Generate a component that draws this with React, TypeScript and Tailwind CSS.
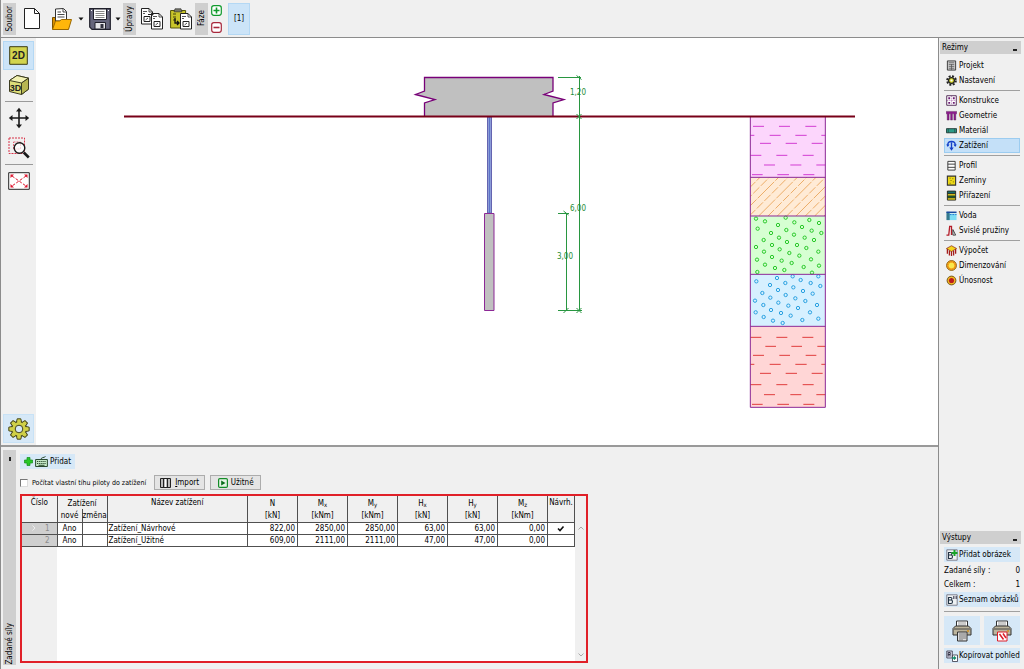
import React from "react";

type IconProps = { children: React.ReactNode; box?: string; className?: string };

function Icon({ children, box = "0 0 12 12", className = "h-3 w-3" }: IconProps) {
  return (
    <svg viewBox={box} className={`${className} shrink-0`} fill="none" aria-hidden="true">
      {children}
    </svg>
  );
}

/* ---------- top toolbar ---------- */

function StripLabel({ text }: { text: string }) {
  return (
    <div className="flex h-8 w-[13px] items-center justify-center bg-[#cfcfcf]">
      <span className="rotate-180 leading-[13px] [writing-mode:vertical-rl]">{text}</span>
    </div>
  );
}

function Caret() {
  return (
    <Icon box="0 0 6 4" className="h-1 w-1.5">
      <path d="M0.5 0.5h5L3 3.5z" fill="#111" />
    </Icon>
  );
}

function Sheet({ x, y }: { x: number; y: number }) {
  return (
    <g transform={`translate(${x} ${y})`}>
      <path d="M.5.5h7.500l3.500 3.500v12H.5z" fill="#fff" stroke="#222" />
      <path d="M8 .5v3.500h3.500" stroke="#222" strokeWidth=".8" />
      <path d="M2 3.500h4M2 5.500h2" stroke="#444" strokeWidth=".9" />
      <path d="M3 8.500h6v5H3z" stroke="#222" />
      <path d="M4.500 12l2.500-2" stroke="#222" strokeWidth=".8" />
    </g>
  );
}

function TopBar() {
  return (
    <header className="flex h-[38px] shrink-0 items-center border-b border-[#8c8c8c] pl-0.5">
      <StripLabel text="Soubor" />
      <button aria-label="Nový" className="ml-2">
        <Icon box="0 0 16 21" className="h-[21px] w-4">
          <path d="M.5.5h10l5 5v15H.5z" fill="#fff" stroke="#222" />
          <path d="M10.500.5v5h5" stroke="#222" />
        </Icon>
      </button>
      <button aria-label="Otevřít" className="ml-3 flex items-center gap-1.5">
        <Icon box="0 0 20 22" className="h-[22px] w-5">
          <path d="M.5 21V9.500h5l2 2h9V21z" fill="#d99000" stroke="#7a5200" />
          <path d="M3.500 13V1l8-.5 3 3V13z" fill="#fff" stroke="#333" />
          <path d="M11 1v3h3M5.500 4H9M5.500 6.500h7M5.500 9h7" stroke="#333" strokeWidth=".9" />
          <path d="M.5 21.500l3-8.500h4l2-1.500h10l-3 10z" fill="#ffb60a" stroke="#9a6800" />
        </Icon>
        <Caret />
      </button>
      <button aria-label="Uložit" className="ml-[5px] flex items-center gap-1">
        <Icon box="0 0 22 22" className="h-[22px] w-[22px]">
          <path d="M.7.7h20.600v20.600H3L.7 19z" fill="#65657c" stroke="#20202c" strokeWidth="1.200" />
          <path d="M4.500 1h13v10.500h-13z" fill="#fff" stroke="#20202c" />
          <path d="M6.500 3.500h9M6.500 5.500h9M6.500 7.500h9M6.500 9.500h9" stroke="#888" />
          <path d="M6 14.500h10.500V21H6z" fill="#e4e4e8" stroke="#20202c" />
          <path d="M11.500 16h3v4h-3z" fill="#30303e" />
          <path d="M2 2.500h1M19 2.500h1" stroke="#fff" />
        </Icon>
        <Caret />
      </button>
      <div className="ml-0.5">
        <StripLabel text="Úpravy" />
      </div>
      <button aria-label="Kopírovat" className="ml-[5px]">
        <Icon box="0 0 22 22" className="h-[22px] w-[22px]">
          <Sheet x={0} y={0} />
          <Sheet x={10} y={5} />
          <path d="M7 6.500h5m-1.500-1.500L12 6.500 10.500 8" stroke="#222" />
        </Icon>
      </button>
      <button aria-label="Vložit" className="ml-[7px]">
        <Icon box="0 0 22 22" className="h-[22px] w-[22px]">
          <path d="M.6 2.500h15V20H.6z" fill="#c9c52a" stroke="#55540c" />
          <path d="M5 .8h6l1 3H4z" fill="#77776a" stroke="#333" strokeWidth=".7" />
          <path d="M3 6h3M3 9h3M3 12h3" stroke="#44440c" />
          <path d="M5 10v5h4m-2-2l2 2-2 2" stroke="#111" strokeWidth="1.300" />
          <Sheet x={10} y={5} />
        </Icon>
      </button>
      <div className="ml-[3px]">
        <StripLabel text="Fáze" />
      </div>
      <div className="ml-[3px] flex flex-col gap-1.5">
        <button aria-label="Přidat fázi">
          <Icon box="0 0 11 11" className="h-[11px] w-[11px]">
            <rect x=".7" y=".7" width="9.600" height="9.600" rx="2.200" fill="#fff" stroke="#109a2c" strokeWidth="1.200" />
            <path d="M5.500 2.500v6M2.500 5.500h6" stroke="#109a2c" strokeWidth="1.600" />
          </Icon>
        </button>
        <button aria-label="Odebrat fázi">
          <Icon box="0 0 11 11" className="h-[11px] w-[11px]">
            <rect x=".7" y=".7" width="9.600" height="9.600" rx="2.200" fill="#fff" stroke="#a8283c" strokeWidth="1.200" />
            <path d="M2.500 5.500h6" stroke="#a8283c" strokeWidth="1.600" />
          </Icon>
        </button>
      </div>
      <button className="ml-1.5 h-8 w-[22px] border border-[#b4d8f4] bg-[#cce4f8]">[1]</button>
    </header>
  );
}

/* ---------- left view tools ---------- */

function ViewTools() {
  return (
    <nav aria-label="Pohled" className="flex w-[35px] shrink-0 flex-col items-start pt-[3px] pb-0.5 pl-0.5">
      <button aria-label="2D" className="flex h-[29px] w-[31px] items-center justify-center border border-[#b4d8f4] bg-[#cce4f8]">
        <Icon box="0 0 19 19" className="h-[19px] w-[19px]">
          <path d="M.7.7h17.600v17.600H.7z" fill="#d2d44e" stroke="#3c3c14" />
          <text x="9.500" y="13" textAnchor="middle" fontSize="10" fontWeight="700" fill="#222" className="font-['Liberation_Sans',sans-serif]">2D</text>
        </Icon>
      </button>
      <button aria-label="3D" className="flex h-[29px] w-[31px] items-center justify-center">
        <Icon box="0 0 22 22" className="h-[22px] w-[22px]">
          <path d="M1.500 6.500L9 1.500l11.500 2.700v11L13.500 20.500l-12-3z" fill="#dcdc78" stroke="#3c3c20" />
          <path d="M1.500 6.500l12 2.500 7-4.800L9 1.500z" fill="#f2f2b4" stroke="#3c3c20" />
          <path d="M13.500 9l7-4.800v11l-7 5.300z" fill="#b6b652" stroke="#3c3c20" />
          <text x="7.500" y="16.500" textAnchor="middle" fontSize="9" fontWeight="700" fill="#222" className="font-['Liberation_Sans',sans-serif]">3D</text>
        </Icon>
      </button>
      <div className="ml-0.5 h-[3px] w-7 border-b border-[#9a9a9a]" />
      <button aria-label="Posun" className="flex h-8 w-[31px] items-center justify-center">
        <Icon box="0 0 22 22" className="h-[22px] w-[22px]">
          <path d="M11 2v18M2 11h18" stroke="#1a1a1a" strokeWidth="1.600" />
          <path d="M8 4.500L11 .8l3 3.700zM8 17.500l3 3.700 3-3.700zM4.500 8L.8 11l3.700 3zM17.500 8l3.700 3-3.700 3z" fill="#1a1a1a" />
        </Icon>
      </button>
      <button aria-label="Zvětšit" className="flex h-7 w-[31px] items-center justify-center">
        <Icon box="0 0 22 22" className="h-[22px] w-[22px]">
          <path d="M1 1h15.500v15.500H1z" stroke="#d83248" strokeDasharray="2 1" />
          <path d="M5.500 5h7v7h-7z" stroke="#d83248" strokeWidth=".7" strokeDasharray="2 1" />
          <circle cx="11.500" cy="11" r="5.300" fill="#fff" fillOpacity=".7" stroke="#1a1a1a" strokeWidth="1.400" />
          <path d="M15.800 15.500l5 5" stroke="#1a1a1a" strokeWidth="2.600" />
        </Icon>
      </button>
      <div className="ml-0.5 h-[3px] w-7 border-b border-[#9a9a9a]" />
      <button aria-label="Zobrazit vše" className="flex h-8 w-[31px] items-center justify-center">
        <Icon box="0 0 22 18" className="h-[18px] w-[22px]">
          <path d="M.7.7h20.600v16.600H.7z" fill="#fff" stroke="#252525" />
          <path d="M4 4l14 10M18 4L4 14" stroke="#dd1830" strokeDasharray="3 1.500" />
          <path d="M2.500 6V2.500H6zM19.500 6V2.500H16zM2.500 12v3.500H6zM19.500 12v3.500H16z" fill="#dd1830" />
        </Icon>
      </button>
      <button aria-label="Nastavení zobrazení" className="mt-auto flex h-[29px] w-[31px] items-center justify-center border border-[#c8e2f6] bg-[#d6e8f7]">
        <Icon box="-11 -11 22 22" className="h-[22px] w-[22px]">
          <g fill="#d0d048" stroke="#45451c">
            {[0, 45, 90, 135, 180, 225, 270, 315].map((a) => (
              <path key={a} d="M-2.600-6.500l.8-3.700h3.600l.8 3.700z" transform={`rotate(${a})`} />
            ))}
            <circle r="7.200" />
          </g>
          {[0, 45, 90, 135, 180, 225, 270, 315].map((a) => (
            <path key={a} d="M-2-6l.6-2.500h2.800L2-6z" fill="#d0d048" transform={`rotate(${a})`} />
          ))}
          <circle r="3.800" fill="#d6e8f7" stroke="#45451c" />
        </Icon>
      </button>
    </nav>
  );
}

/* ---------- pile and soil profile drawing ---------- */

const claySegments: [number, number, number][] = [
  [64, 39, 72], [64, 117, 150], [64, 196, 229],
  [91, 31, 43], [91, 89, 122], [91, 166, 200], [91, 244, 256],
  [115, 60, 93], [115, 137, 171], [115, 215, 248],
  [151, 31, 64], [151, 109, 142], [151, 188, 221],
  [180, 72, 105], [180, 151, 184], [180, 229, 256],
  [209, 36, 68], [209, 112, 147], [209, 190, 223],
];

const rockSegments: [number, number, number][] = [
  [697, 31, 64], [697, 109, 142], [697, 187, 220],
  [724, 76, 108], [724, 154, 186], [724, 232, 256],
  [751, 39, 72], [751, 118, 150], [751, 197, 229],
  [778, 31, 43], [778, 89, 122], [778, 166, 200], [778, 244, 256],
  [805, 60, 93], [805, 137, 171], [805, 215, 248],
  [839, 31, 64], [839, 109, 142], [839, 188, 221],
  [869, 72, 105], [869, 151, 184], [869, 229, 256],
  [898, 36, 68], [898, 112, 147], [898, 190, 223],
];

const greenDots: [number, number][] = [
  [48, 341], [75, 349], [137, 338], [163, 352], [208, 345], [237, 354], [114, 360], [53, 371], [139, 375], [186, 366],
  [93, 384], [162, 389], [215, 377], [244, 384], [117, 398], [194, 398], [71, 405], [141, 411], [222, 405], [96, 420],
  [171, 420], [48, 426], [119, 433], [199, 429], [72, 440], [148, 444], [235, 440], [96, 456], [178, 452], [51, 464],
  [125, 467], [213, 463], [155, 474], [75, 479], [237, 482], [105, 489], [191, 486], [133, 495], [52, 501], [216, 503],
];

const blueDots: [number, number][] = [
  [49, 529], [111, 519], [182, 525], [235, 514], [90, 540], [136, 534], [212, 534], [160, 547], [241, 543], [114, 555],
  [67, 564], [189, 558], [137, 570], [218, 566], [91, 578], [166, 580], [45, 587], [196, 588], [115, 593], [70, 600],
  [145, 602], [231, 600], [93, 615], [174, 609], [47, 622], [123, 624], [210, 622], [152, 632], [71, 636], [235, 641],
  [187, 645], [99, 647], [128, 654], [158, 514],
];

const hatchStarts = [-84, -56, -28, 0, 28, 56, 84, 112, 140, 168, 196, 224];

function SoilColumn() {
  return (
    <g transform="translate(740 105) scale(.33333)">
      <clipPath id="hatch"><path d="M31 217h225v116H31z" /></clipPath>
      <path d="M31 36h225v181H31z" fill="#fcd6fc" />
      <path d="M31 217h225v116H31z" fill="#ffebd6" />
      <path d="M31 333h225v175H31z" fill="#d6ffd2" />
      <path d="M31 508h225v156H31z" fill="#d6f0ff" />
      <path d="M31 664h225v243H31z" fill="#ffd6d6" />
      <g stroke="#d23cd2" strokeWidth="3">
        {claySegments.map(([y, a, b]) => <path key={`${y}-${a}`} d={`M${a} ${y}H${b}`} />)}
      </g>
      <g stroke="#e8a052" strokeWidth="2.500" clipPath="url(#hatch)">
        {hatchStarts.map((x, i) => (
          <path key={x} d={`M${x + 28} 333l117-117`} strokeDasharray={i % 2 ? "26 6" : "70 5"} />
        ))}
      </g>
      <g stroke="#28c828" strokeWidth="3">
        {greenDots.map(([x, y]) => <circle key={`${x}-${y}`} cx={x} cy={y} r="5" />)}
      </g>
      <g stroke="#28a0e0" strokeWidth="3">
        {blueDots.map(([x, y]) => <circle key={`${x}-${y}`} cx={x} cy={y} r="5" />)}
      </g>
      <g stroke="#e03c3c" strokeWidth="3">
        {rockSegments.map(([y, a, b]) => <path key={`${y}-${a}`} d={`M${a} ${y}H${b}`} />)}
      </g>
      <path d="M31 36V907H256V36M31 217H256M31 333H256M31 508H256M31 664H256" stroke="#8c2896" strokeWidth="3" />
    </g>
  );
}

function Drawing() {
  return (
    <svg viewBox="36 38 902 407" className="h-full w-full" fill="none" role="img" aria-label="Schéma piloty a geologický profil">
      <SoilColumn />
      <path d="M424.500 116V103l10.500-3.500-19.500-5 9-3.500V77.500H553V91l-9 3.500 20 5-11 3.500v13z" fill="#c0c0c0" />
      <path d="M424.500 116V103l10.500-3.500-19.500-5 9-3.500V77.500H553V91l-9 3.500 20 5-11 3.500v13" stroke="#780078" strokeWidth="1.300" />
      <path d="M487.500 117h4v96h-4z" fill="#8c9cd8" stroke="#6464b0" />
      <path d="M489.500 117v96" stroke="#5c74c8" />
      <path d="M484.500 213.500h9.500v97h-9.500z" fill="#c0c0c0" stroke="#8c2896" />
      <path d="M124 116.500h731" stroke="#780018" strokeWidth="2" />
      <g stroke="#289640">
        <path d="M558 77.500h23M579.500 76v235M558 213.500h11M566.500 213v98M558 310.500h24" />
        <path d="M576.500 75.500l5 4M576.500 119l5-5M576.500 114l5 5M563.500 211l5 4M563.500 313l5-5M576.500 308l5 5M576.500 313l5-5" />
      </g>
      <g fill="#1e8c34" fontSize="8">
        <text x="570" y="95">1,20</text>
        <text x="570" y="211">6,00</text>
        <text x="557" y="259">3,00</text>
      </g>
    </svg>
  );
}

/* ---------- bottom input panel ---------- */

const loads = [
  { id: 1, name: "Zatížení_Návrhové", values: ["822,00", "2850,00", "2850,00", "63,00", "63,00", "0,00"], design: true },
  { id: 2, name: "Zatížení_Užitné", values: ["609,00", "2111,00", "2111,00", "47,00", "47,00", "0,00"], design: false },
];

const columns = [
  { symbol: "N", sub: "", unit: "[kN]" },
  { symbol: "M", sub: "x", unit: "[kNm]" },
  { symbol: "M", sub: "y", unit: "[kNm]" },
  { symbol: "H", sub: "x", unit: "[kN]" },
  { symbol: "H", sub: "y", unit: "[kN]" },
  { symbol: "M", sub: "z", unit: "[kNm]" },
];

function LoadTable() {
  return (
    <table className="w-full table-fixed border-collapse leading-[11px]">
      <colgroup>
        <col className="w-[35px]" />
        <col className="w-[25px]" />
        <col className="w-[25px]" />
        <col />
        {columns.map((c) => <col key={c.symbol + c.sub} className="w-[50px]" />)}
        <col className="w-[27px]" />
      </colgroup>
      <thead className="bg-[#f0f0f0] [&_th]:px-0 [&_th]:pt-px [&_th]:pb-0 [&_th]:font-normal">
        <tr className="h-[13px]">
          <th rowSpan={2} className="border-r border-b border-[#505050] align-top">Číslo</th>
          <th colSpan={2} className="border-r border-[#505050]">Zatížení</th>
          <th rowSpan={2} className="border-r border-b border-[#505050] align-top">Název zatížení</th>
          {columns.map((c) => (
            <th key={c.symbol + c.sub} className="border-r border-[#505050]">
              {c.symbol}
              {c.sub && <sub className="text-[6px] leading-none">{c.sub}</sub>}
            </th>
          ))}
          <th rowSpan={2} className="border-r border-b border-[#505050] align-top">Návrh.</th>
        </tr>
        <tr className="h-[13px]">
          <th className="border-r border-b border-[#505050]">nové</th>
          <th className="border-r border-b border-[#505050]">změna</th>
          {columns.map((c) => (
            <th key={c.symbol + c.sub} className="border-r border-b border-[#505050]">{c.unit}</th>
          ))}
        </tr>
      </thead>
      <tbody className="bg-white [&_td]:border-r [&_td]:border-b [&_td]:border-[#505050] [&_td]:p-0">
        {loads.map((row) => (
          <tr key={row.id} className="h-3">
            <td className="bg-[#cfcfcf] text-[#8c8c8c]">
              <div className="flex items-center justify-between pr-[7px] pl-2.5">
                <span>
                  {row.design && (
                    <Icon box="0 0 4 6" className="h-1.5 w-1">
                      <path d="M.5.5L3 3 .5 5.500" stroke="#eee" />
                    </Icon>
                  )}
                </span>
                <span>{row.id}</span>
              </div>
            </td>
            <td className="text-center">Ano</td>
            <td />
            <td><div className="pl-px">{row.name}</div></td>
            {row.values.map((v, i) => (
              <td key={i} className="text-right"><div className="pr-0.5">{v}</div></td>
            ))}
            <td>
              {row.design && (
                <div className="flex justify-center">
                  <Icon box="0 0 8 7" className="h-[7px] w-2">
                    <path d="M1 3.500L3 5.500 6.500 1.500" stroke="#111" strokeWidth="1.600" />
                  </Icon>
                </div>
              )}
            </td>
          </tr>
        ))}
      </tbody>
    </table>
  );
}

function InputPanel() {
  return (
    <section className="flex h-56 shrink-0 border-t-2 border-[#999] pt-[3px] pb-1 pl-0.5">
      <div className="flex w-[13px] shrink-0 flex-col items-center justify-between bg-[#cfcfcf] pt-[7px]">
        <span className="h-1 w-0.5 bg-[#222]" />
        <span className="rotate-180 leading-[13px] [writing-mode:vertical-rl]">Zadané síly</span>
      </div>
      <div className="flex min-w-0 flex-1 flex-col items-start pt-1 pb-0.5 pl-1">
        <button className="flex h-[15px] items-center gap-0.5 bg-[#d6e8f7] pr-1 pl-1">
          <Icon box="0 0 9 9" className="h-[9px] w-[9px]">
            <path d="M3 .5h3V3h2.500v3H6v2.500H3V6H.5V3H3z" fill="#28c828" stroke="#148c1e" strokeWidth=".7" />
          </Icon>
          <Icon box="0 0 13 11" className="h-[11px] w-[13px]">
            <path d="M.6 3.500h11.800v7H.6z" fill="#c4e8c8" stroke="#2a4a30" />
            <path d="M2 5.500h9M2 7.500h9" stroke="#2a4a30" strokeDasharray="1.300 .8" />
            <path d="M3.500 9.300h6M6 3.500C6 1 9 2 10.500.5" stroke="#2a4a30" />
          </Icon>
          Přidat
        </button>
        <div className="mt-1.5 flex items-center">
          <label className="flex items-center gap-1 text-[7px]">
            <input type="checkbox" className="h-2 w-2 appearance-none border border-[#777] border-r-[#ddd] border-b-[#ddd] bg-white checked:bg-[#444]" />
            Počítat vlastní tíhu piloty do zatížení
          </label>
          <button className="ml-2 flex h-[15px] w-[51px] items-center justify-center gap-1 border border-[#acacac] bg-[#e4e4e4]">
            <Icon box="0 0 11 10" className="h-2.5 w-[11px]">
              <path d="M.5.5h10v9H.5z" fill="#bbb" stroke="#222" />
              <path d="M3.500.5v9M7.500.5v9" stroke="#222" />
              <path d="M5.500 1v8" stroke="#fff" />
            </Icon>
            <span><u className="underline-offset-1">I</u>mport</span>
          </button>
          <button className="ml-[5px] flex h-[15px] w-[51px] items-center justify-center gap-[3px] border border-[#acacac] bg-[#e4e4e4]">
            <Icon box="0 0 10 10" className="h-2.5 w-2.5">
              <rect x=".6" y=".6" width="8.800" height="8.800" rx="1.200" fill="#e6f4e6" stroke="#148c28" strokeWidth="1.200" />
              <path d="M3.200 2.500v5L7.500 5z" fill="#0c6e1c" />
            </Icon>
            Užitné
          </button>
        </div>
        <div className="mt-1 flex min-h-0 w-[568px] max-w-full flex-1 border-2 border-[#e02028] bg-white">
          <div className="flex min-w-0 flex-1 flex-col">
            <LoadTable />
            <div className="w-[35px] flex-1 bg-[#f0f0f0]" />
          </div>
          <div className="flex w-[11px] flex-col items-center justify-between bg-[#f0f0f0] pt-[30px] pb-1">
            <Icon box="0 0 6 4" className="h-1 w-1.5"><path d="M.5 3.500L3 1l2.500 2.500" stroke="#aaa" /></Icon>
            <Icon box="0 0 6 4" className="h-1 w-1.5"><path d="M.5.5L3 3 5.500.5" stroke="#aaa" /></Icon>
          </div>
        </div>
      </div>
    </section>
  );
}

/* ---------- right panel ---------- */

const modeGroups: { label: string; icon: React.ReactNode }[][] = [
  [
    {
      label: "Projekt",
      icon: (
        <>
          <path d="M1.500 1h9v10h-9z" fill="#ccc" stroke="#333" />
          <path d="M3 3h6M3 5h6M3 7h6M3 9h6M6 4.500V11" stroke="#555" strokeWidth=".8" />
        </>
      ),
    },
    {
      label: "Nastavení",
      icon: (
        <>
          <circle cx="6" cy="6" r="4.800" stroke="#222" strokeWidth="2" strokeDasharray="2.200 1.570" />
          <circle cx="6" cy="6" r="3.200" fill="#dddd2a" stroke="#222" strokeWidth="1.400" />
          <circle cx="6" cy="6" r="1.200" fill="#fff" />
        </>
      ),
    },
  ],
  [
    {
      label: "Konstrukce",
      icon: (
        <>
          <path d="M.8.8h10.400v10.400H.8z" fill="#fff" stroke="#4c2450" />
          <path d="M2.500 2.500h2v2h-2zM7.500 2.500h2v2h-2zM2.500 7.500h2v2h-2zM7.500 7.500h2v2h-2z" fill="#6c1c74" />
          <path d="M6 1v10M1 6h10" stroke="#84288c" strokeWidth=".6" strokeDasharray="1 1" />
        </>
      ),
    },
    {
      label: "Geometrie",
      icon: <path d="M.3 1.500h11.400v2.700h-1V11H8.600V4.200H7V11H5V4.200H3.400V11H1.300V4.200h-1z" fill="#8c1c8c" stroke="#4c144c" strokeWidth=".4" />,
    },
    {
      label: "Materiál",
      icon: (
        <>
          <path d="M.5 4h11v4.500H.5z" fill="#2c9c88" stroke="#223c38" />
          <path d="M2.500 4v4.500M9.500 4v4.500" stroke="#223c38" strokeWidth=".7" />
        </>
      ),
    },
    {
      label: "Zatížení",
      icon: (
        <>
          <path d="M2 6V5C2 .5 10 .5 10 5v1" stroke="#1440c8" strokeWidth="1.500" />
          <path d="M6 2.500V9" stroke="#1440c8" strokeWidth="1.500" />
          <path d="M3.600 8.300h4.800L6 11.700zM.2 5h3.600L2 7.500zM8.200 5h3.600L10 7.500z" fill="#1440c8" />
        </>
      ),
    },
  ],
  [
    { label: "Profil", icon: <path d="M2 1.500h8v9.500H2zM2 4.500h8M2 8h8" fill="#fff" stroke="#333" /> },
    {
      label: "Zeminy",
      icon: (
        <>
          <path d="M1.500 1.200h9v9.800h-9z" fill="#ecd818" stroke="#333" strokeWidth="1.200" />
          <path d="M4 3.500h1M7 4h1M5 6h1M7.500 7.500h1M4 9h1" stroke="#665c08" />
        </>
      ),
    },
    {
      label: "Přiřazení",
      icon: (
        <>
          <path d="M1.500 1.200h9v9.800h-9z" fill="#f0dc20" />
          <path d="M1.500 1.200h9v2.800h-9z" fill="#146c6c" />
          <path d="M1.500 6.500h9v2h-9z" fill="#127c34" />
          <path d="M1.500 1.200h9v9.800h-9zM2 4h8M2 6.500h8M2 8.500h8" stroke="#222" />
        </>
      ),
    },
  ],
  [
    {
      label: "Voda",
      icon: (
        <>
          <path d="M1 4h10.500v7H1z" fill="#7cdcf4" />
          <path d="M.5 2v9H4V2z" fill="#34788c" />
          <path d="M.5 2.500h11" stroke="#1848a0" strokeWidth="1.600" />
          <path d="M4 5h7.500" stroke="#1c70cc" strokeDasharray="2 1" />
        </>
      ),
    },
    {
      label: "Svislé pružiny",
      icon: (
        <>
          <path d="M.5 11H3L4 1.500h2V11" stroke="#b41c28" strokeWidth="1.400" />
          <path d="M7.500 11V5l3 6z" stroke="#333" />
        </>
      ),
    },
  ],
  [
    {
      label: "Výpočet",
      icon: (
        <>
          <path d="M1.500 4v5.500M3.700 6v5.500M6 6.500V12M8.300 6v5.500M10.500 4v5.500" stroke="#a41c1c" strokeWidth="1.400" />
          <path d="M.5 3.800L6 .8l5.500 3L6 7.200z" fill="#f4d41c" stroke="#8c2814" strokeWidth=".8" />
        </>
      ),
    },
    {
      label: "Dimenzování",
      icon: (
        <>
          <circle cx="6" cy="6" r="5.400" fill="#f8b81c" stroke="#8c5c10" />
          <circle cx="6" cy="6" r="4" stroke="#d84018" strokeDasharray="1 1.500" />
          <circle cx="6" cy="6" r="3" fill="#fae84c" />
        </>
      ),
    },
    {
      label: "Únosnost",
      icon: (
        <>
          <circle cx="6" cy="6" r="4.800" fill="#f0b820" stroke="#6c4c14" />
          <circle cx="6" cy="6" r="2.800" fill="#bc1c1c" />
        </>
      ),
    },
  ],
];

function PanelTitle({ text }: { text: string }) {
  return (
    <div className="flex h-[13px] items-center justify-between bg-[#cfcfcf] pr-1 pl-0.5">
      <h2>{text}</h2>
      <button aria-label={`Sbalit ${text}`} className="flex h-1.5 items-end">
        <span className="h-0.5 w-1 bg-[#222]" />
      </button>
    </div>
  );
}

function PictureIcon({ mark }: { mark: React.ReactNode }) {
  return (
    <Icon>
      <path d="M.8.8h10.400v10.400H.8z" fill="#eef2f4" stroke="#667" strokeWidth=".8" />
      <path d="M2.500 3.500h2.300c1.500 0 1.500 2.500 0 2.500H2.500 5c2 0 2 3.500 0 3.500H2.500z" stroke="#234" strokeWidth="1.100" />
      {mark}
    </Icon>
  );
}

function Printer({ red }: { red?: boolean }) {
  return (
    <Icon box="0 0 20 22" className="h-[22px] w-5">
      <path d="M4.500 1h11v6h-11z" fill="#fff" stroke="#333" />
      <path d="M6 3h8M6 5h8" stroke="#999" />
      <path d="M1 8.500L3.500 6h13L19 8.500V15H1z" fill="#bcb49c" stroke="#333" />
      <path d="M2 9h16" stroke="#444" />
      <path d="M15 11h2" stroke="#d08c18" strokeWidth="1.300" />
      <path d="M5.500 12h9.500v9H5.500z" fill={red ? "#fff" : "#ddd"} stroke={red ? "#dc1c28" : "#333"} />
      {red ? (
        <path d="M7.500 14l4 5.500M11 13.500l3 4.500" stroke="#dc1c28" strokeWidth="1.500" />
      ) : (
        <path d="M7 14h7M7 16h7M7 18h7M7 20h4" stroke="#777" />
      )}
    </Icon>
  );
}

function SidePanel() {
  return (
    <aside className="flex w-[86px] shrink-0 flex-col border-l border-[#8c8c8c] pt-[3px] pr-[3px] pb-1.5 pl-px">
      <PanelTitle text="Režimy" />
      <nav aria-label="Režimy" className="mt-1 pr-px pl-1">
        {modeGroups.map((group, i) => (
          <ul key={i} className={i > 0 ? "mt-0.5 border-t border-[#a0a0a0] pt-0.5" : ""}>
            {group.map((m) => (
              <li key={m.label}>
                <button
                  className={
                    m.label === "Zatížení"
                      ? "flex h-[15px] w-full items-center gap-0.5 bg-[#c4e0f8] pl-0.5 outline outline-1 -outline-offset-1 outline-[#9cccf0]"
                      : "flex h-[15px] w-full items-center gap-0.5 pl-0.5"
                  }
                >
                  <Icon className="h-[11px] w-[11px]">{m.icon}</Icon>
                  <span className="whitespace-nowrap">{m.label}</span>
                </button>
              </li>
            ))}
          </ul>
        ))}
      </nav>
      <div className="mt-auto">
        <PanelTitle text="Výstupy" />
      </div>
      <div className="pr-px pl-1 whitespace-nowrap">
        <button className="mt-[3px] flex h-[15px] w-full items-center gap-px bg-[#d6e8f7] pl-0.5">
          <PictureIcon mark={<path d="M8.500 1v6M5.500 4h6" stroke="#18a428" strokeWidth="2" />} />
          Přidat obrázek
        </button>
        <dl className="mt-0.5 leading-[14px]">
          <div className="flex justify-between"><dt>Zadané síly :</dt><dd>0</dd></div>
          <div className="flex justify-between"><dt>Celkem :</dt><dd>1</dd></div>
        </dl>
        <button className="flex h-[15px] w-full items-center gap-px bg-[#d6e8f7] pl-0.5">
          <PictureIcon mark={<path d="M7.500 2v3M9 2v3M10.500 2v3" stroke="#556" strokeWidth=".9" />} />
          Seznam obrázků
        </button>
        <div className="my-1 border-t border-[#a0a0a0]" />
        <div className="flex gap-1">
          <button aria-label="Tisk protokolu" className="flex h-[29px] flex-1 items-center justify-center bg-[#d6e8f7]"><Printer /></button>
          <button aria-label="Tisk obrázku" className="flex h-[29px] flex-1 items-center justify-center bg-[#d6e8f7]"><Printer red /></button>
        </div>
        <button className="mt-[3px] flex h-[15px] w-full items-center gap-px bg-[#d6e8f7] pl-0.5">
          <Icon>
            <path d="M.8 1h5.500v7H.8z" fill="#dde" stroke="#334" strokeWidth=".8" />
            <path d="M2.200 2.500v4M2.200 2.500h2v2h-2M4 4.500v2" stroke="#334" />
            <path d="M6.500 5h5v6.500h-5z" fill="#fff" stroke="#334" strokeWidth=".8" />
            <path d="M6 8h3.500M8 6.500L9.500 8 8 9.500" stroke="#148c6c" strokeWidth="1.300" />
          </Icon>
          Kopírovat pohled
        </button>
      </div>
    </aside>
  );
}

export default function App() {
  return (
    <div className="flex h-screen flex-col border-l border-[#8c8c8c] bg-[#f0f0f0] font-['DejaVu_Sans_Condensed','DejaVu_Sans',sans-serif] text-[8px] leading-3 text-black">
      <TopBar />
      <div className="flex min-h-0 flex-1">
        <main className="flex min-w-0 flex-1 flex-col">
          <div className="flex min-h-0 flex-1">
            <ViewTools />
            <div className="min-w-0 flex-1 bg-white">
              <Drawing />
            </div>
          </div>
          <InputPanel />
        </main>
        <SidePanel />
      </div>
    </div>
  );
}
